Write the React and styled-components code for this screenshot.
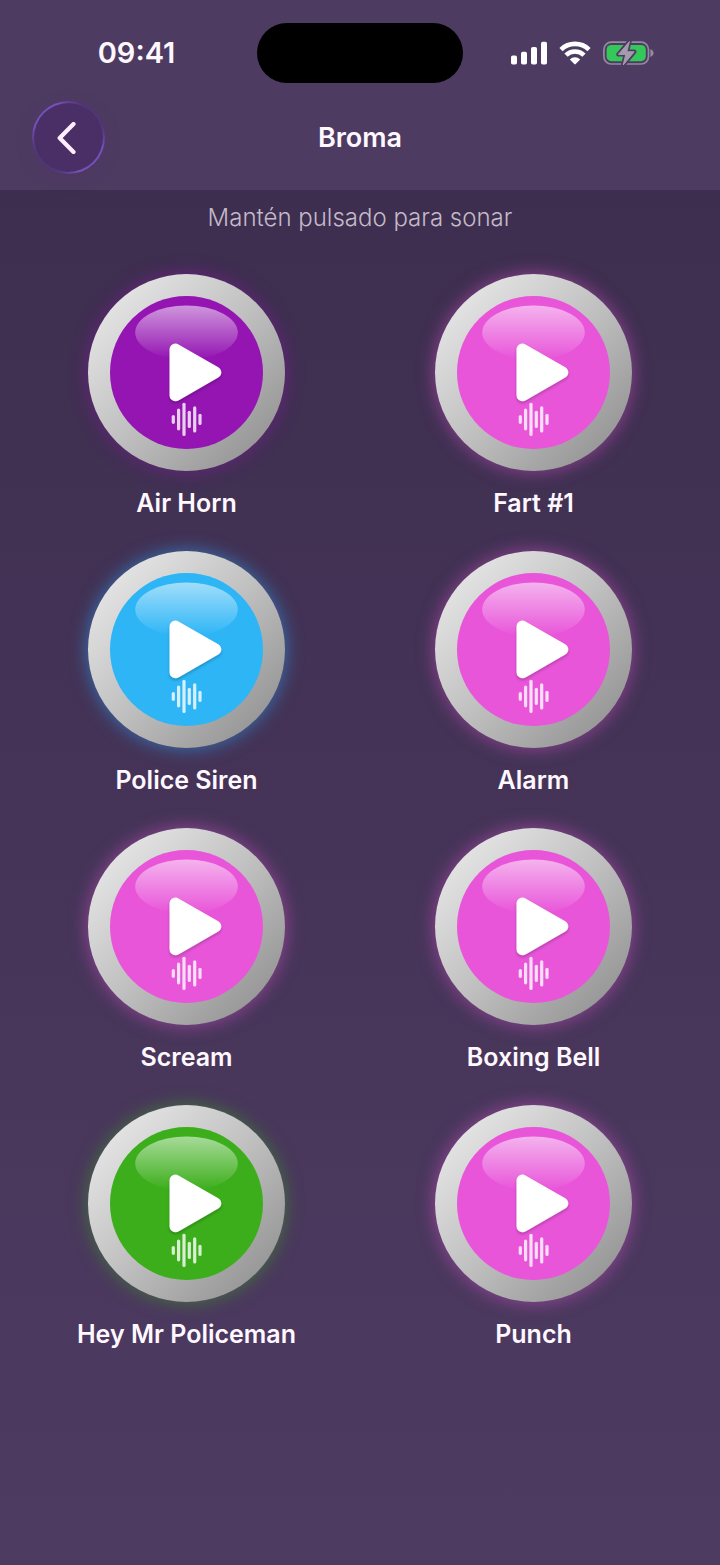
import { useId } from 'react';
import styled, { createGlobalStyle } from 'styled-components';

const GlobalStyle = createGlobalStyle`
  * {
    box-sizing: border-box;
  }

  body {
    margin: 0;
    background: #4e3b62;
    font-family: Inter, 'Liberation Sans', sans-serif;
    color: #fff8ff;
  }
`;

const Screen = styled.div`
  min-height: 100vh;
  background: linear-gradient(180deg, #3b2c4c 0%, #4e3b62 100%);
`;

const Header = styled.header`
  padding: 23px 0 16px;
  background: #4e3b62;
`;

const StatusBar = styled.div`
  display: grid;
  grid-template-columns: 1fr auto 1fr;
  align-items: center;
  justify-items: center;
  padding: 0 16px;
`;

const Clock = styled.span`
  font-size: 29px;
  line-height: 32px;
  font-weight: 600;
`;

const Island = styled.div`
  width: 206px;
  height: 60px;
  border-radius: 30px;
  background: #000;
`;

const StatusIcons = styled.div`
  display: flex;
  align-items: center;
  gap: 12px;

  svg {
    display: block;
  }
`;

const NavBar = styled.nav`
  display: grid;
  grid-template-columns: 72px 1fr 72px;
  align-items: center;
  margin-top: 18px;
  padding: 0 32px;
`;

const BackButton = styled.button`
  display: flex;
  align-items: center;
  justify-content: center;
  width: 73px;
  height: 73px;
  padding: 0;
  border: 2px solid transparent;
  border-radius: 50%;
  background:
    linear-gradient(#4a2f66, #4a2f66) padding-box,
    linear-gradient(45deg, #50357a 18%, #7650ba 34%, #7650ba 66%, #50357a 82%) border-box;
  box-shadow: 0 4px 16px rgba(74, 47, 102, 0.25);
  cursor: pointer;
`;

const Title = styled.h1`
  margin: 0;
  font-size: 27px;
  line-height: 32px;
  font-weight: 600;
  text-align: center;
`;

const Hint = styled.p`
  margin: 0;
  padding: 12px 30px 0;
  font-size: 24px;
  line-height: 32px;
  font-weight: 300;
  text-align: center;
  color: #c4bac9;
`;

const SoundGrid = styled.main`
  display: grid;
  grid-template-columns: 1fr 1fr;
  gap: 32px 34px;
  padding: 40px 30px;
`;

const SoundItem = styled.div`
  display: flex;
  flex-direction: column;
  align-items: center;
  gap: 16px;
`;

const SoundButton = styled.button`
  display: block;
  width: 197px;
  height: 197px;
  padding: 22px;
  border: none;
  border-radius: 50%;
  background: linear-gradient(135deg, #e6e6e6 10%, #c0c0c0 50%, #949494 90%);
  box-shadow: 0 0 18px ${(props) => props.$glow};
  cursor: pointer;
`;

const ButtonFace = styled.svg`
  display: block;
  width: 153px;
  height: 153px;
  border-radius: 50%;
  background: ${(props) => props.$color};
`;

const SoundLabel = styled.label`
  font-size: 25px;
  line-height: 32px;
  font-weight: 600;
  white-space: nowrap;
`;

const COLORS = {
  purple: { face: '#9415b2', glow: 'rgba(148, 21, 178, 0.5)' },
  pink: { face: '#e855d9', glow: 'rgba(232, 85, 217, 0.5)' },
  blue: { face: '#2db5f6', glow: 'rgba(45, 160, 246, 0.6)' },
  green: { face: '#3cae1b', glow: 'rgba(60, 174, 27, 0.5)' },
};

const SOUNDS = [
  { name: 'Air Horn', color: 'purple' },
  { name: 'Fart #1', color: 'pink' },
  { name: 'Police Siren', color: 'blue' },
  { name: 'Alarm', color: 'pink' },
  { name: 'Scream', color: 'pink' },
  { name: 'Boxing Bell', color: 'pink' },
  { name: 'Hey Mr Policeman', color: 'green' },
  { name: 'Punch', color: 'pink' },
];

// x centre and height of each bar of the sound wave
const WAVE = [
  [63.3, 9],
  [68.6, 22],
  [74, 33.4],
  [79.3, 17.4],
  [84.7, 26.4],
  [90, 11.4],
];

function SignalIcon() {
  return (
    <svg width="36" height="24" viewBox="0 0 36 24" fill="#fff" aria-hidden="true">
      <rect x="0" y="14.5" width="6" height="9" rx="1.8" />
      <rect x="10" y="10.7" width="6" height="12.8" rx="1.8" />
      <rect x="20" y="6" width="6" height="17.5" rx="1.8" />
      <rect x="30" y="0.8" width="6" height="22.7" rx="1.8" />
    </svg>
  );
}

function WifiIcon() {
  return (
    <svg width="32" height="24" viewBox="0 0 32 24" aria-hidden="true">
      <g fill="none" stroke="#fff" strokeWidth="4.6">
        <path d="M2 8.6a20 20 0 0 1 28 0" />
        <path d="M7 14.2a12.8 12.8 0 0 1 18 0" />
      </g>
      <path d="M10.8 18.5a7.4 7.4 0 0 1 10.4 0l-4.5 4.6q-.7.7-1.4 0z" fill="#fff" />
    </svg>
  );
}

function BatteryIcon() {
  const bolt = 'M26.4 0.6 15.4 13.4h7.4L20.2 24 31.2 10.8h-7.4z';
  return (
    <svg width="53" height="24" viewBox="0 0 53 24" aria-hidden="true">
      <rect x="0.9" y="1.2" width="44.6" height="21.8" rx="7.4" fill="none" stroke="#94899f" strokeWidth="1.7" />
      <path d="M47.4 8.2c2 .6 3.2 2.2 3.2 3.9s-1.2 3.3-3.2 3.9z" fill="#94899f" />
      <rect x="3.6" y="4" width="39.2" height="16.2" rx="4.6" fill="#34c759" />
      <path d={bolt} fill="#94899f" stroke="#4e3b62" strokeWidth="4.4" strokeLinejoin="round" />
      <path d={bolt} fill="#a59bae" stroke="#a59bae" strokeWidth="1" strokeLinejoin="round" />
    </svg>
  );
}

function Sound({ name, color }) {
  const id = useId();
  const { face, glow } = COLORS[color];

  return (
    <SoundItem>
      <SoundButton id={id} type="button" $glow={glow}>
        <ButtonFace viewBox="0 0 153 153" $color={face} aria-hidden="true">
          <defs>
            <linearGradient id={id + 'gloss'} x1="0" y1="0" x2="0" y2="1">
              <stop offset="0" stopColor="#fff" stopOpacity="0.55" />
              <stop offset="1" stopColor="#fff" stopOpacity="0" />
            </linearGradient>
            <filter id={id + 'shadow'} x="-20%" y="-20%" width="140%" height="140%">
              <feDropShadow dx="0" dy="2" stdDeviation="1.6" floodColor="#000" floodOpacity="0.22" />
            </filter>
          </defs>
          <ellipse cx="76.5" cy="36.5" rx="51.3" ry="27" fill={`url(#${id}gloss)`} />
          <path
            d="M65.5 53.6v45.6L105.3 76.4z"
            fill="#fff"
            stroke="#fff"
            strokeWidth="12"
            strokeLinejoin="round"
            filter={`url(#${id}shadow)`}
          />
          {WAVE.map(([x, h]) => (
            <rect key={x} x={x - 1.6} y={123.4 - h / 2} width="3.2" height={h} rx="1.6" fill="#fff" fillOpacity="0.8" />
          ))}
        </ButtonFace>
      </SoundButton>
      <SoundLabel htmlFor={id}>{name}</SoundLabel>
    </SoundItem>
  );
}

function App() {
  return (
    <Screen>
      <GlobalStyle />
      <Header>
        <StatusBar>
          <Clock>09:41</Clock>
          <Island />
          <StatusIcons>
            <SignalIcon />
            <WifiIcon />
            <BatteryIcon />
          </StatusIcons>
        </StatusBar>
        <NavBar>
          <BackButton type="button" aria-label="Atrás">
            <svg width="24" height="32" viewBox="0 0 24 32" fill="none" aria-hidden="true">
              <path d="M16.5 2 2.7 16l13.8 14" stroke="#ffeeff" strokeWidth="4.2" strokeLinecap="round" strokeLinejoin="round" />
            </svg>
          </BackButton>
          <Title>Broma</Title>
        </NavBar>
      </Header>
      <Hint>Mantén pulsado para sonar</Hint>
      <SoundGrid>
        {SOUNDS.map((sound) => (
          <Sound key={sound.name} {...sound} />
        ))}
      </SoundGrid>
    </Screen>
  );
}

export default App;
